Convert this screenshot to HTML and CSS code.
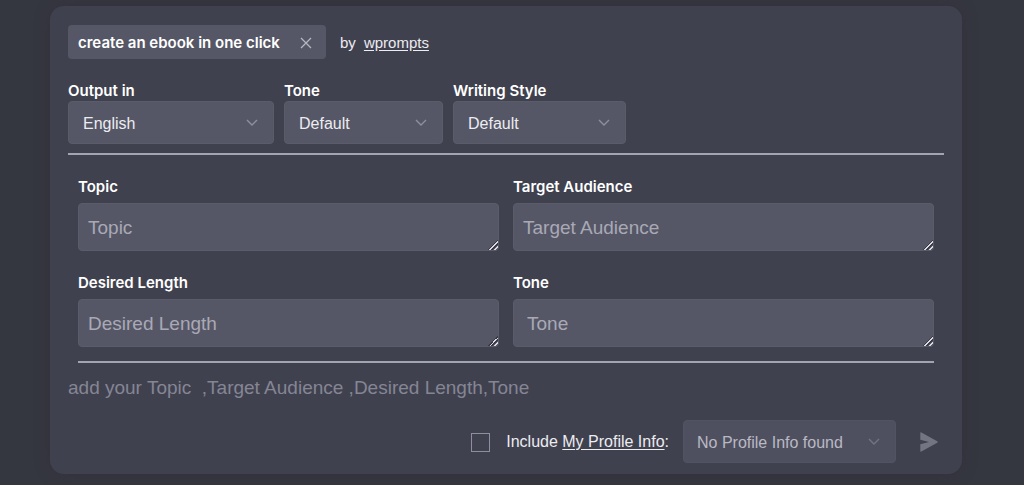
FILE: index.html
```
<!DOCTYPE html>
<html lang="en">
<head>
<meta charset="utf-8">
<meta name="viewport" content="width=device-width, initial-scale=1">
<title>Create an ebook in one click</title>
<link rel="stylesheet" href="styles.css">
</head>
<body>
<form class="card">
  <header class="heading">
    <div class="chip">
      <span>create an ebook in one click</span>
      <button class="icon-button" type="button" aria-label="Close">
        <svg class="close-icon" viewBox="0 0 12 12" aria-hidden="true"><path d="M1 1l10 10M11 1L1 11"/></svg>
      </button>
    </div>
    <p class="author">by <a href="#">wprompts</a></p>
  </header>

  <div class="options">
    <div class="option option-language">
      <label for="language">Output in</label>
      <div class="select">
        <select id="language"><option>English</option></select>
        <svg class="chevron" viewBox="0 0 12 7" aria-hidden="true"><path d="M1 1l5 5 5-5"/></svg>
      </div>
    </div>
    <div class="option option-tone">
      <label for="tone">Tone</label>
      <div class="select">
        <select id="tone"><option>Default</option></select>
        <svg class="chevron" viewBox="0 0 12 7" aria-hidden="true"><path d="M1 1l5 5 5-5"/></svg>
      </div>
    </div>
    <div class="option option-style">
      <label for="style">Writing Style</label>
      <div class="select">
        <select id="style"><option>Default</option></select>
        <svg class="chevron" viewBox="0 0 12 7" aria-hidden="true"><path d="M1 1l5 5 5-5"/></svg>
      </div>
    </div>
  </div>

  <div class="fields">
    <div class="field">
      <label for="topic">Topic</label>
      <textarea id="topic" rows="1" placeholder="Topic"></textarea>
    </div>
    <div class="field">
      <label for="audience">Target Audience</label>
      <textarea id="audience" rows="1" placeholder="Target Audience"></textarea>
    </div>
    <div class="field">
      <label for="length">Desired Length</label>
      <textarea id="length" rows="1" placeholder="Desired Length"></textarea>
    </div>
    <div class="field">
      <label for="voice">Tone</label>
      <textarea id="voice" class="roomy" rows="1" placeholder="Tone"></textarea>
    </div>
  </div>

  <textarea class="prompt" rows="1" aria-label="Prompt" placeholder="add your Topic  ,Target Audience ,Desired Length,Tone"></textarea>

  <footer class="actions">
    <input class="checkbox" id="include" type="checkbox">
    <p class="include"><label for="include">Include</label> <a href="#">My Profile Info</a>:</p>
    <div class="select select-profile">
      <select aria-label="Profile info" disabled><option>No Profile Info found</option></select>
      <svg class="chevron" viewBox="0 0 12 7" aria-hidden="true"><path d="M1 1l5 5 5-5"/></svg>
    </div>
    <button class="icon-button send" type="submit" aria-label="Send">
      <svg class="send-icon" viewBox="0 0 18 20" aria-hidden="true"><path d="M0.3 1.2Q0.3 0 1.4 0.5L17.2 9.2Q18.4 10 17.2 10.8L1.4 19.5Q0.3 20 0.3 18.8V12.2L9 10L0.3 7.8Z"/></svg>
    </button>
  </footer>
</form>
</body>
</html>
```
FILE: styles.css
```
* {
  box-sizing: border-box;
}

body {
  margin: 0;
  padding: 6px 62px 11px 50px;
  background: #353740;
  color: #ececf1;
  font: 16px/20px "Liberation Sans", Arial, sans-serif;
}

p {
  margin: 0;
}

a {
  color: inherit;
  text-underline-offset: 2px;
}

button,
select,
textarea {
  font: inherit;
  color: inherit;
}

.card {
  display: flex;
  flex-direction: column;
  padding: 19px 18px 11px;
  border-radius: 14px;
  background: #40414f;
  box-shadow: 0 0 15px rgba(50, 40, 50, 0.4);
}

.heading {
  display: flex;
  align-items: center;
  gap: 14px;
}

.chip {
  display: flex;
  align-items: center;
  gap: 20px;
  height: 34px;
  padding: 1px 14px 0 10px;
  border-radius: 4px;
  background: #565766;
  color: #fff;
  font: 600 15px/20px Inter, "Liberation Sans", sans-serif;
}

.icon-button {
  display: flex;
  padding: 0;
  border: 0;
  background: none;
}

.close-icon {
  width: 12px;
  height: 12px;
  fill: none;
  stroke: #b6b6c1;
  stroke-width: 1.3;
}

.author {
  padding-top: 2px;
  font-size: 15px;
}

.author a {
  margin-left: 4px;
}

.options {
  display: flex;
  gap: 10px;
  padding: 22px 0 9px;
  border-bottom: 2px solid #a3a4b0;
}

.option label,
.field label {
  display: block;
  color: #fff;
  font: 600 15px/20px Inter, "Liberation Sans", sans-serif;
}

.option-language {
  width: 206px;
}

.option-tone {
  width: 159px;
}

.option-style {
  width: 173px;
}

.select {
  position: relative;
}

.select select {
  display: block;
  width: 100%;
  height: 43px;
  padding: 2px 40px 0 14px;
  border: 1px solid #5b5c6a;
  border-radius: 4px;
  background: #565766;
  appearance: none;
}

.select select:disabled {
  padding-left: 13px;
  background: #4f505f;
  border-color: #525362;
  color: #b9b9c4;
  opacity: 1;
}

.chevron {
  position: absolute;
  top: 18px;
  right: 16px;
  width: 12px;
  height: 7px;
  fill: none;
  stroke: #8e8ea0;
  stroke-width: 1.4;
  pointer-events: none;
}

.fields {
  display: grid;
  grid-template-columns: 1fr 1fr;
  gap: 22px 14px;
  margin: 0 10px;
  padding: 22px 0 14px;
  border-bottom: 2px solid #a3a4b0;
}

.field textarea {
  display: block;
  width: 100%;
  height: 48px;
  margin-top: 6px;
  padding: 14px 9px 12px;
  border: 1px solid #5b5c6a;
  border-radius: 4px;
  background: #565766;
  font-size: 19px;
  resize: vertical;
  overflow: hidden;
}

.field textarea::-webkit-resizer {
  background: linear-gradient(135deg, transparent 65%, #3a3a46 65% 70%, #d8d8de 70% 76%, #3a3a46 76% 82%, #565766 82% 85%, #d8d8de 85% 91%, transparent 91%);
}

.field .roomy {
  padding-left: 13px;
}

::placeholder {
  color: #a9a9b6;
  opacity: 1;
}

.prompt {
  display: block;
  height: 24px;
  margin-top: 13px;
  padding: 0;
  border: 0;
  background: none;
  font-size: 19px;
  line-height: 24px;
  resize: none;
  overflow: hidden;
}

.prompt::placeholder {
  color: #858694;
}

.actions {
  display: flex;
  align-items: center;
  justify-content: flex-end;
  margin-top: 20px;
}

.checkbox {
  width: 19px;
  height: 19px;
  margin: 2px 16px 0 0;
  border: 1px solid #8e8ea0;
  appearance: none;
}

.checkbox:checked {
  background: #8e8ea0;
}

.select-profile {
  width: 213px;
  margin-left: 14px;
}

.select-profile .chevron {
  stroke: #737483;
}

.send {
  margin: 0 6px 0 24px;
}

.send-icon {
  width: 18px;
  height: 20px;
  fill: #747582;
}
```
